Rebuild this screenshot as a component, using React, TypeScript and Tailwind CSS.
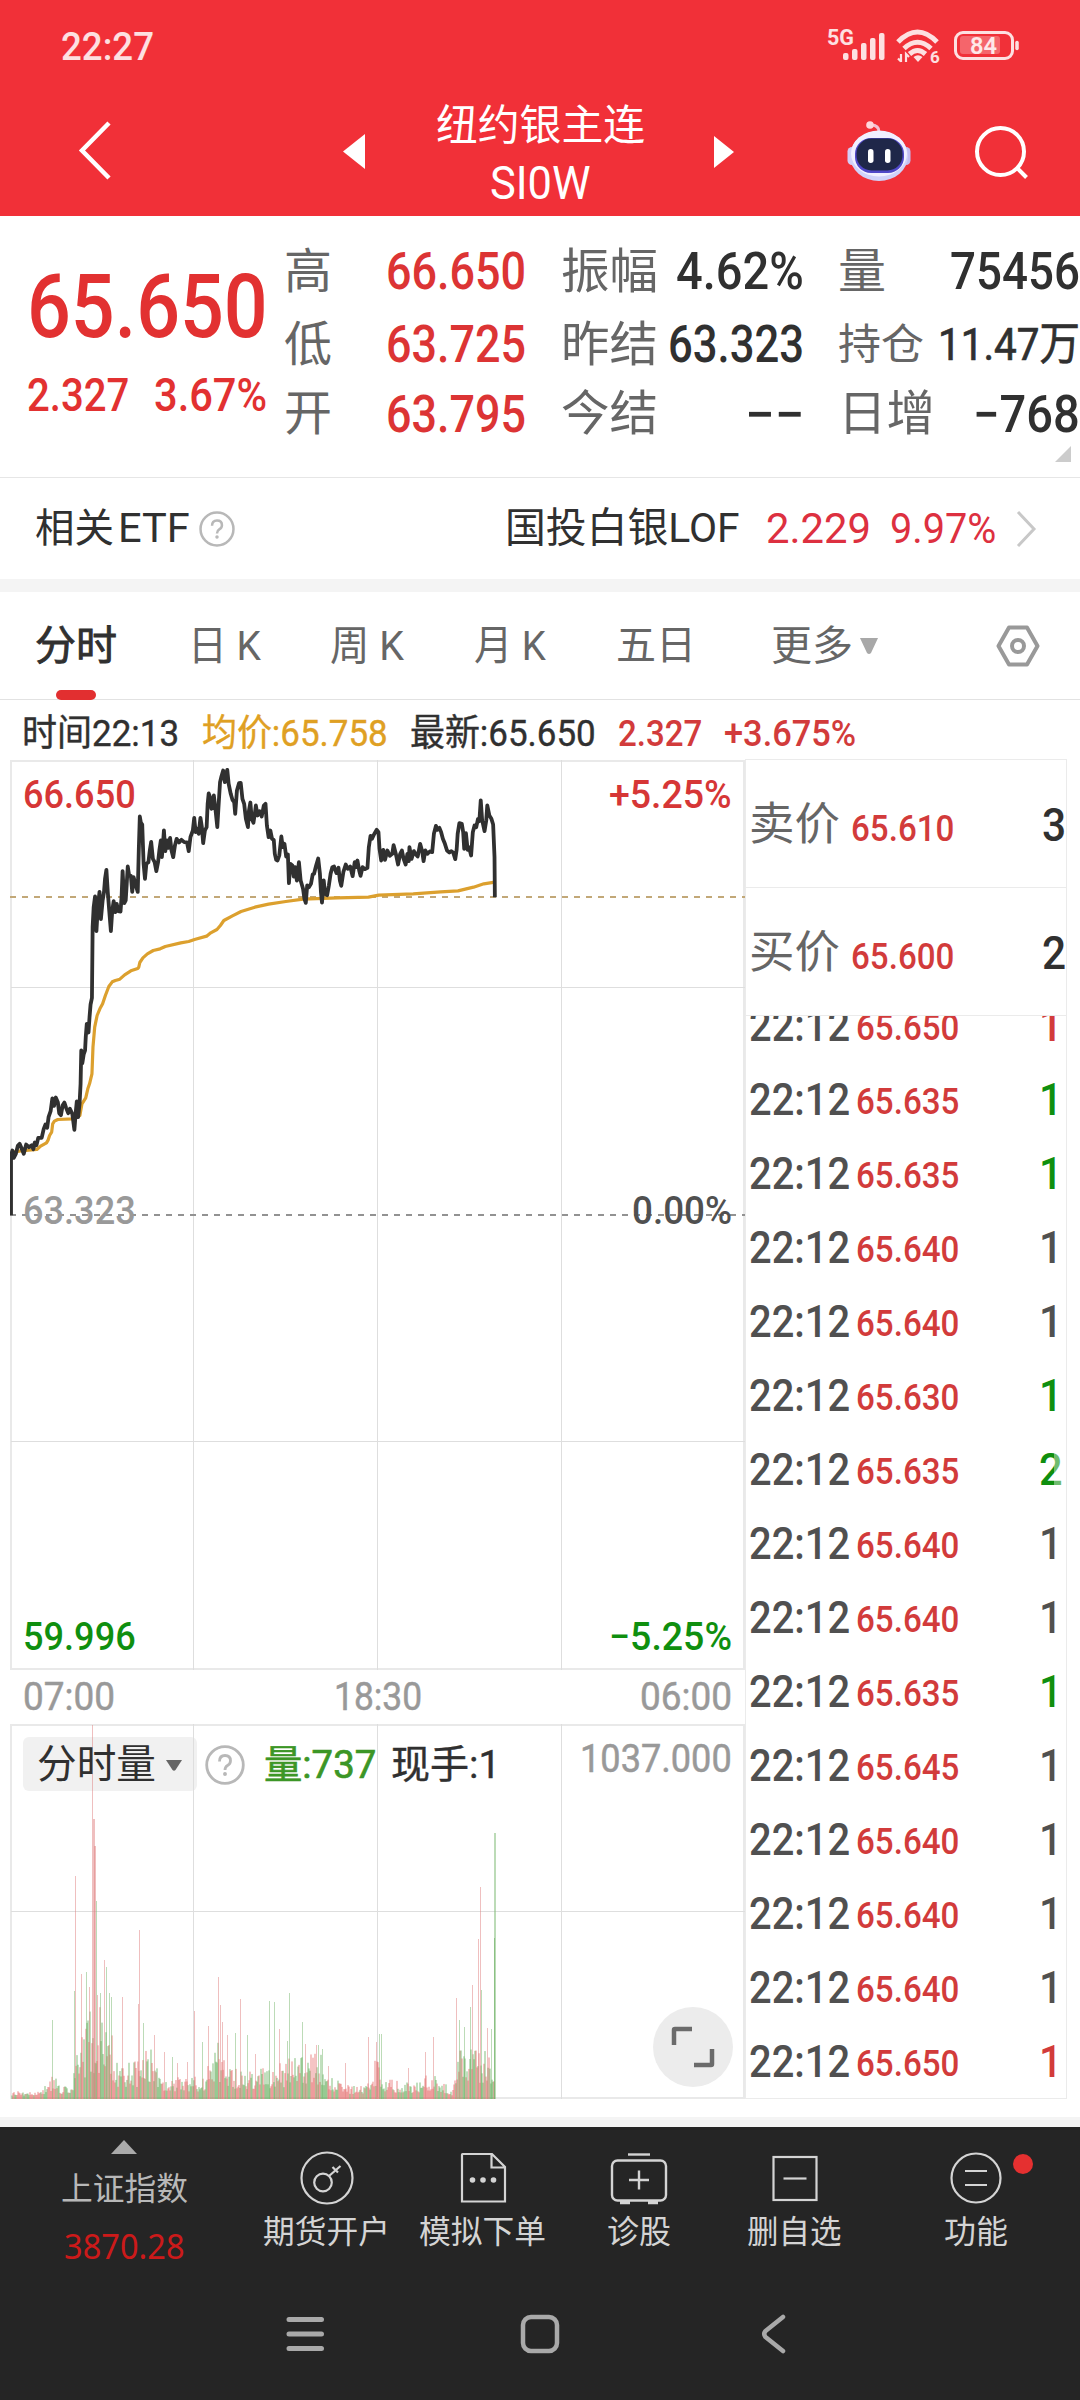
import React, { useLayoutEffect, useRef } from 'react';

interface FitProps {
  text: string;
  className?: string;
}

// Squeezes the glyphs horizontally so that the text fills its box
function Fit({ text, className = '' }: FitProps) {
  const box = useRef<HTMLSpanElement>(null);
  const inner = useRef<HTMLSpanElement>(null);

  useLayoutEffect(() => {
    if (!box.current || !inner.current) return;
    const scale = box.current.clientWidth / inner.current.offsetWidth;
    inner.current.style.transform = `scaleX(${scale})`;
  }, [text]);

  return (
    <span className={`block shrink-0 leading-none whitespace-nowrap ${className}`}>
      <span ref={box} className="block w-full">
        <span ref={inner} className="inline-block origin-left whitespace-pre align-top">{text}</span>
      </span>
    </span>
  );
}

function StatusBar() {
  return (
    <div className="flex h-[96px] items-center pl-[61px] text-white/85">
      <Fit text="22:27" className="mt-[-2px] w-[93px] text-[39px] font-medium" />
      <svg className="mt-[-4px] ml-[670px]" width="196" height="40" viewBox="824 26 196 40" fill="none">
        <text x="827" y="45" fontSize="22" fontWeight="700" fill="currentColor" textLength="27" lengthAdjust="spacingAndGlyphs">5G</text>
        <g fill="currentColor">
          <rect x="843" y="53" width="5.500" height="7" rx="2" />
          <rect x="852" y="49" width="5.500" height="11" rx="2" />
          <rect x="861" y="43" width="5.500" height="17" rx="2" />
          <rect x="870" y="38" width="5.500" height="22" rx="2" />
          <rect x="879" y="33" width="5.500" height="27" rx="2" />
        </g>
        <g stroke="currentColor" strokeWidth="5">
          <path d="M898 42Q917.500 22 937 42" />
          <path d="M904 48.500Q917.500 36 931 48.500" />
          <path d="M909.500 54Q917.500 47 925.500 54" />
        </g>
        <path d="M913.500 57Q918 53.500 922.500 57L918 62z" fill="currentColor" />
        <path d="M901 62v-8M898 58.500l3 3M906 62v-8l3 3" stroke="currentColor" strokeWidth="2.200" />
        <text x="930" y="62.500" fontSize="17" fontWeight="700" fill="currentColor">6</text>
        <rect x="955.500" y="32.500" width="57" height="26" rx="7.500" stroke="currentColor" strokeWidth="3" />
        <rect x="960" y="36" width="40" height="18" rx="3" fill="currentColor" opacity="0.3" />
        <path d="M1017 42.500v6" stroke="currentColor" strokeWidth="3.500" strokeLinecap="round" />
        <text x="970" y="54" fontSize="23" fontWeight="600" fill="currentColor" textLength="27" lengthAdjust="spacingAndGlyphs">84</text>
      </svg>
    </div>
  );
}

function Robot() {
  return (
    <svg width="64" height="62" viewBox="0 0 64 62" fill="none">
      <path d="M32 12Q32 5 24 5" stroke="#f3c0d2" strokeWidth="3" />
      <circle cx="23" cy="5" r="3.800" fill="#ffd6dc" />
      <rect x="0.500" y="27" width="9" height="18" rx="4.500" fill="#d4cdf6" />
      <rect x="54.500" y="27" width="9" height="18" rx="4.500" fill="#c3bdf0" />
      <ellipse cx="32" cy="36" rx="29" ry="25" fill="#d0d2fa" />
      <ellipse cx="32" cy="33.500" rx="28" ry="23" fill="#f1efff" />
      <rect x="8" y="18" width="49" height="35" rx="16" fill="#5048c8" />
      <rect x="9.500" y="18.500" width="46" height="32" rx="15" fill="#1f2749" />
      <rect x="21" y="29" width="5.500" height="14" rx="2.700" fill="#fff" />
      <rect x="38" y="29" width="5.500" height="14" rx="2.700" fill="#fff" />
    </svg>
  );
}

function Header() {
  return (
    <header className="h-[216px] bg-[#f13038] text-white">
      <StatusBar />
      <div className="flex h-[120px] items-start">
        <svg className="mt-[24px] ml-[76px]" width="38" height="62" viewBox="0 0 38 62" fill="none" stroke="#fff" strokeWidth="4.500">
          <path d="M33 3L6 30.500L33 58" />
        </svg>
        <svg className="mt-[38px] ml-[229px]" width="22" height="35" viewBox="0 0 22 35" fill="#fff">
          <path d="M0 17.500L22 0V35z" />
        </svg>
        <div className="mt-[9px] ml-[69px] flex w-[212px] flex-col items-center">
          <Fit text="纽约银主连" className="w-[209px] text-[42px]" />
          <Fit text="SI0W" className="mt-[13px] w-[101px] text-[46px]" />
        </div>
        <svg className="mt-[40px] ml-[68px]" width="20" height="32" viewBox="0 0 20 32" fill="#fff">
          <path d="M20 16L0 0V32z" />
        </svg>
        <div className="mt-[24px] ml-[113px]">
          <Robot />
        </div>
        <svg className="mt-[28px] ml-[62px]" width="58" height="58" viewBox="0 0 58 58" fill="none" stroke="#fff" strokeWidth="4">
          <circle cx="27.500" cy="27.500" r="23.500" />
          <path d="M44 44L53.500 53.500" />
        </svg>
      </div>
    </header>
  );
}

function StatRow({ label, labelClass, value, valueClass, rowClass }: {
  label: string;
  labelClass: string;
  value: string;
  valueClass: string;
  rowClass: string;
}) {
  return (
    <div className={`flex items-center justify-between ${rowClass}`}>
      <Fit text={label} className={`text-[#666] ${labelClass}`} />
      <Fit text={value} className={valueClass} />
    </div>
  );
}

function Quote() {
  return (
    <section className="relative flex h-[261px] pt-[19px]">
      <div className="ml-[27px] w-[240px] text-[#e23131]">
        <Fit text="65.650" className="mt-[27px] w-[241px] text-[89px] font-medium" />
        <div className="mt-[21px] flex justify-between">
          <Fit text="2.327" className="w-[102px] text-[46px] font-medium" />
          <Fit text="3.67%" className="w-[113px] text-[46px] font-medium" />
        </div>
      </div>
      <div className="ml-[17px] w-[242px] text-[#dc3434]">
        <StatRow label="高" labelClass="w-[48px] text-[48px]" value="66.650" valueClass="w-[140px] text-[51px] font-medium" rowClass="h-[73px]" />
        <StatRow label="低" labelClass="w-[48px] text-[48px]" value="63.725" valueClass="w-[140px] text-[51px] font-medium" rowClass="h-[73px]" />
        <StatRow label="开" labelClass="w-[48px] text-[48px]" value="63.795" valueClass="w-[140px] text-[51px] font-medium" rowClass="h-[66px]" />
      </div>
      <div className="ml-[35px] w-[243px] text-[#303030]">
        <StatRow label="振幅" labelClass="w-[97px] text-[48px]" value="4.62%" valueClass="w-[128px] text-[51px] font-medium" rowClass="h-[73px]" />
        <StatRow label="昨结" labelClass="w-[97px] text-[48px]" value="63.323" valueClass="w-[136px] text-[51px] font-medium" rowClass="h-[73px]" />
        <StatRow label="今结" labelClass="w-[97px] text-[48px]" value="−−" valueClass="w-[59px] text-[51px] font-medium" rowClass="h-[66px]" />
      </div>
      <div className="ml-[34px] w-[242px] text-[#303030]">
        <StatRow label="量" labelClass="w-[48px] text-[48px]" value="75456" valueClass="w-[130px] text-[51px] font-medium" rowClass="h-[73px]" />
        <StatRow label="持仓" labelClass="w-[86px] text-[42px]" value="11.47万" valueClass="w-[142px] text-[45px] [-webkit-text-stroke:0.7px]" rowClass="h-[73px]" />
        <StatRow label="日增" labelClass="w-[97px] text-[48px]" value="−768" valueClass="w-[107px] text-[51px] font-medium" rowClass="h-[66px]" />
      </div>
      <svg className="absolute top-[230px] left-[1055px]" width="16" height="16" viewBox="0 0 16 16" fill="#ccc">
        <path d="M16 0V16H0z" />
      </svg>
    </section>
  );
}

function HelpIcon({ size }: { size: number }) {
  return (
    <svg width={size} height={size} viewBox="0 0 40 40" fill="none" stroke="#b8b8b8" strokeWidth="2.800">
      <circle cx="20" cy="20" r="18.300" />
      <path d="M14.500 16.500q0-6 5.500-6t5.500 5.200q0 3-3 4.800q-2.500 1.500-2.500 4.500" />
      <circle cx="20" cy="29" r="1.200" fill="#b8b8b8" stroke="#b8b8b8" strokeWidth="1.500" />
    </svg>
  );
}

function EtfRow() {
  return (
    <section className="flex h-[102px] items-center border-t border-[#e6e6e6] pl-[35px] text-[#303030]">
      <Fit text="相关" className="w-[79px] text-[40px]" />
      <Fit text="ETF" className="ml-[4px] w-[72px] text-[41px]" />
      <div className="ml-[9px]">
        <HelpIcon size={36} />
      </div>
      <Fit text="国投白银LOF" className="ml-[270px] w-[235px] text-[41px]" />
      <Fit text="2.229" className="ml-[26px] w-[105px] text-[43px] text-[#dd3040]" />
      <Fit text="9.97%" className="ml-[19px] w-[106px] text-[43px] text-[#dd3040]" />
      <svg className="ml-[20px]" width="22" height="38" viewBox="0 0 22 38" fill="none" stroke="#c8c8c8" strokeWidth="3">
        <path d="M2 2L18 19L2 36" />
      </svg>
    </section>
  );
}

function Tabs() {
  return (
    <nav className="flex h-[108px] items-center border-b border-[#e2e2e2] pt-[1px] pl-[35px] text-[#666]">
      <div className="relative">
        <Fit text="分时" className="w-[82px] text-[41px] text-[#303030] [-webkit-text-stroke:0.9px]" />
        <div className="absolute top-[64px] left-[21px] h-[10px] w-[40px] rounded-[5px] bg-[#e22f30]" />
      </div>
      <Fit text="日 K" className="ml-[71px] w-[73px] text-[41px]" />
      <Fit text="周 K" className="ml-[69px] w-[74px] text-[41px]" />
      <Fit text="月 K" className="ml-[70px] w-[72px] text-[41px]" />
      <Fit text="五日" className="ml-[70px] w-[80px] text-[40px]" />
      <Fit text="更多" className="ml-[75px] w-[82px] text-[41px]" />
      <svg className="ml-[7px]" width="18" height="16" viewBox="0 0 18 16" fill="#a8a8a8">
        <path d="M0 0H18L11 15Q9 17 7 15z" />
      </svg>
      <svg className="ml-[118px]" width="44" height="42" viewBox="0 0 44 42" fill="none" stroke="#999" strokeWidth="4" strokeLinejoin="round">
        <path d="M13 2.500H31L41.500 21L31 39.500H13L2.500 21z" />
        <circle cx="22" cy="21" r="6" />
      </svg>
    </nav>
  );
}

function InfoLine() {
  return (
    <div className="flex h-[59px] items-center pt-[8px] pl-[22px] text-[37px] text-[#303030]">
      <Fit text="时间22:13" className="w-[157px] [-webkit-text-stroke:0.4px]" />
      <Fit text="均价:65.758" className="ml-[23px] w-[186px] text-[#dfa023] [-webkit-text-stroke:0.4px]" />
      <Fit text="最新:65.650" className="ml-[22px] w-[186px] [-webkit-text-stroke:0.4px]" />
      <Fit text="2.327" className="ml-[22px] w-[84px] font-medium text-[#d23b3b]" />
      <Fit text="+3.675%" className="ml-[22px] w-[132px] font-medium text-[#d23b3b]" />
    </div>
  );
}

const PRICE =
  'M32 1394V1215L36 1200L40 1222L46 1210L52 1185L57 1180L62 1192L69 1210L76 1182L84 1190L92 1184L97 1196L101 1176L106 1184L111 1162L121 1162L127 1135L132 1122L137 1132L141 1100L147 1082L152 1044L157 1066L162 1041L168 1055L172 1088L177 1094L182 1064L187 1056L192 1072L198 1088L203 1075L210 1090L216 1138L220 1085L223 1053L227 1100L231 1060L234 1000L236 900L239 938L243 912L247 900L249 860L252 820L257 846L260 800L263 762L267 742L269 530L272 470L276 438L280 542L284 470L289 424L293 506L298 450L302 425L305 385L309 358L313 425L317 478L322 542L326 480L330 452L335 485L339 460L343 482L350 483L353 440L356 362L361 458L365 450L368 400L371 348L375 375L380 376L384 424L388 380L393 400L400 424L403 300L406 198L409 216L413 222L417 340L421 385L425 340L431 335L435 300L439 274L444 325L449 335L454 362L459 335L463 298L467 270L470 320L473 285L476 240L480 302L485 270L489 292L494 262L498 300L503 320L508 285L513 265L520 276L527 268L535 275L543 276L548 302L553 260L560 240L564 202L568 245L573 235L577 250L582 202L586 228L590 278L595 240L600 230L603 160L606 129L610 140L614 175L618 172L621 135L626 180L631 230L635 160L639 95L643 78L648 60L653 95L657 70L660 58L664 100L670 130L675 148L680 155L683 190L688 120L694 98L699 97L704 145L709 160L714 205L720 230L723 180L727 156L731 205L736 217L740 190L743 165L748 195L754 182L760 198L766 165L771 160L775 225L780 260L785 240L790 265L795 268L798 310L802 328L806 330L811 315L817 258L821 290L826 280L831 318L836 312L839 398L843 340L849 345L853 378L857 350L862 390L868 335L873 390L880 415L884 445L888 457L892 405L897 410L903 400L908 372L912 370L918 345L924 324L929 370L932 425L935 456L940 390L944 430L950 434L955 405L960 370L965 350L970 348L977 368L983 352L987 390L991 406L997 365L1004 342L1010 355L1017 348L1024 377L1030 335L1034 350L1038 330L1043 360L1047 376L1053 350L1060 356L1067 352L1071 290L1076 256L1080 265L1086 252L1094 238L1099 245L1102 295L1107 330L1113 298L1118 328L1125 300L1132 316L1139 310L1143 284L1149 308L1156 342L1162 310L1167 300L1172 325L1178 342L1183 310L1187 332L1189 290L1195 325L1202 302L1208 312L1213 318L1220 280L1226 302L1230 332L1235 300L1241 310L1248 303L1255 305L1260 250L1266 226L1270 238L1276 232L1281 245L1286 265L1292 280L1298 300L1305 306L1310 302L1316 306L1322 326L1326 298L1329 250L1334 218L1341 220L1345 245L1348 295L1353 248L1358 298L1362 290L1368 315L1373 245L1378 225L1383 230L1388 205L1392 212L1396 150L1400 208L1407 242L1412 210L1415 165L1421 195L1427 205L1432 222L1436 320L1437 440';

const AVERAGE =
  'M38 1205L60 1201L107 1197L118 1187L135 1177L140 1168L144 1155L150 1145L153 1120L158 1112L168 1107L210 1105L232 1095L238 1060L249 1042L255 1015L260 1000L267 970L270 890L275 830L282 795L290 775L298 760L306 735L316 708L326 694L335 690L348 686L362 673L380 661L400 654L403 650L406 636L415 622L428 610L445 600L465 595L480 588L525 577L548 573L565 567L600 557L612 547L630 537L640 525L650 510L675 496L700 483L740 470L780 461L830 453L880 446L980 442L1070 440L1100 434L1200 430L1280 424L1330 421L1375 410L1405 400L1437 395';

function PriceChart() {
  return (
    <div className="relative h-[911px] w-[735px]">
      <svg className="block" width="735" height="911" viewBox="10 759 735 911" fill="none">
        <g stroke="#e9e9e9" strokeWidth="2">
          <path d="M11 761H745M11 1669H745M11 760V1670M744 760V1670" />
        </g>
        <g stroke="#dedede" strokeWidth="1">
          <path d="M11 987.500H745M11 1441.500H745M193.500 760V1670M377.500 760V1670M561.500 760V1670" />
        </g>
        <path d="M10 897H745" stroke="#c2a878" strokeWidth="2" strokeDasharray="6 6" />
        <path d="M10 1215H745" stroke="#929292" strokeWidth="2" strokeDasharray="6 6" />
        <g transform="translate(0 750.500) scale(0.34437 0.33333)" strokeLinejoin="round">
          <path d={AVERAGE} stroke="#dca02e" strokeWidth="3.200" vectorEffect="non-scaling-stroke" />
          <path d={PRICE} stroke="#303030" strokeWidth="3.800" vectorEffect="non-scaling-stroke" />
        </g>
      </svg>
      <div className="absolute inset-0 text-[39px] font-medium">
        <Fit text="66.650" className="absolute top-[17px] left-[13px] w-[113px] text-[#d63636]" />
        <Fit text="+5.25%" className="absolute top-[17px] right-[13px] w-[123px] text-[#d63636]" />
        <Fit text="63.323" className="absolute top-[433px] left-[13px] w-[113px] text-[#999]" />
        <Fit text="0.00%" className="absolute top-[433px] right-[13px] w-[100px] text-[#505050]" />
        <Fit text="59.996" className="absolute top-[859px] left-[13px] w-[113px] text-[#0f8f0f]" />
        <Fit text="−5.25%" className="absolute top-[859px] right-[13px] w-[123px] text-[#0f8f0f]" />
      </div>
    </div>
  );
}

// [x, height, up]
const PEAKS: [number, number, number][] = [
  [52, 79, 0], [75, 223, 1], [74, 108, 0], [81, 125, 1], [86, 127, 0], [89, 112, 1], [92, 374, 1], [93, 280, 1],
  [94, 253, 1], [96, 198, 0], [97, 104, 1], [100, 106, 0], [104, 139, 1], [106, 132, 0], [109, 106, 0], [111, 102, 0],
  [122, 102, 1], [138, 95, 1], [139, 169, 1], [143, 76, 0], [154, 64, 1], [164, 47, 1], [172, 42, 0], [177, 36, 1],
  [187, 37, 1], [194, 88, 1], [202, 57, 0], [208, 73, 1], [218, 122, 1], [220, 94, 1], [222, 77, 1], [227, 64, 1],
  [235, 66, 0], [240, 100, 1], [247, 64, 0], [255, 45, 1], [269, 98, 0], [274, 97, 0], [279, 70, 1], [287, 58, 0],
  [289, 106, 0], [302, 77, 0], [305, 55, 1], [316, 54, 1], [318, 54, 0], [322, 50, 0], [328, 33, 1], [345, 36, 1],
  [368, 62, 1], [376, 57, 1], [379, 65, 0], [381, 65, 0], [408, 31, 1], [425, 47, 1], [433, 62, 1], [456, 101, 1],
  [459, 79, 0], [464, 72, 0], [470, 92, 0], [472, 114, 1], [478, 160, 1], [480, 212, 1], [481, 109, 0], [487, 71, 1],
  [491, 70, 0], [494, 266, 0],
];

const ENVELOPE: [number, number][] = [
  [11, 6], [36, 5], [48, 16], [52, 30], [57, 12], [70, 10], [80, 65], [93, 95], [103, 92], [110, 74], [117, 30],
  [138, 40], [145, 62], [152, 42], [165, 22], [203, 22], [220, 62], [231, 30], [268, 30], [279, 34], [303, 46],
  [320, 44], [330, 24], [344, 12], [365, 12], [375, 42], [382, 18], [413, 16], [434, 28], [451, 6], [458, 60],
  [482, 56], [495, 42],
];

function envelopeAt(x: number) {
  const i = Math.max(1, ENVELOPE.findIndex(([ex]) => ex >= x));
  const [x0, h0] = ENVELOPE[i - 1];
  const [x1, h1] = ENVELOPE[i];
  return h0 + ((h1 - h0) * (x - x0)) / (x1 - x0);
}

function buildBars() {
  let seed = 71;
  const random = () => {
    seed = (seed * 16807) % 2147483647;
    return seed / 2147483647;
  };
  const bars: { x: number; h: number; up: boolean }[] = [];
  for (let x = 11; x < 494; x += 1) {
    bars.push({ x, h: 2 + envelopeAt(x) * (0.25 + 0.75 * Math.pow(random(), 1.5)), up: random() > 0.45 });
  }
  return bars;
}

const bars = buildBars();

function VolumeChart() {
  return (
    <div className="relative h-[375px] w-[735px]">
      <svg className="block" width="735" height="375" viewBox="10 1724 735 375" fill="none">
        <g stroke="#e9e9e9" strokeWidth="2">
          <path d="M11 1725H745M11 2098H745M11 1724V2099M744 1724V2099" />
        </g>
        <rect x="23" y="1737" width="174" height="54" rx="6" fill="#f1f1f1" />
        <g stroke="#dedede" strokeWidth="1">
          <path d="M11 1911.500H745M193.500 1724V2099M377.500 1724V2099M561.500 1724V2099" />
        </g>
        {bars.map((bar, i) => (
          <rect key={i} x={bar.x} y={2099 - bar.h} width="2" height={bar.h} fill={bar.up ? '#e04848' : '#3f9c36'} opacity="0.32" />
        ))}
        {PEAKS.map(([x, h, up], i) => (
          <rect key={i} x={x} y={2099 - h} width={h > 240 && x !== 92 ? 2 : 1} height={h} fill={up ? '#e08080' : '#7ab870'} opacity="0.5" />
        ))}
        <rect x="494" y="1938" width="1" height="161" fill="#5aa850" opacity="0.5" />
      </svg>
      <div className="absolute top-[14px] left-[13px] flex h-[54px] items-center text-[#303030]">
        <Fit text="分时量" className="ml-[14px] w-[119px] text-[40px]" />
        <svg className="ml-[10px]" width="16" height="11" viewBox="0 0 16 11" fill="#666">
          <path d="M0 0H16L9.500 10Q8 11.500 6.500 10z" />
        </svg>
        <div className="ml-[23px]">
          <HelpIcon size={40} />
        </div>
        <Fit text="量:737" className="ml-[19px] w-[112px] text-[39px] text-[#3c9626] [-webkit-text-stroke:0.7px]" />
        <Fit text="现手:1" className="ml-[15px] w-[109px] text-[39px] [-webkit-text-stroke:0.4px]" />
      </div>
      <Fit text="1037.000" className="absolute top-[16px] right-[13px] w-[152px] text-[39px] text-[#999] [-webkit-text-stroke:0.5px]" />
      <div className="absolute top-[283px] left-[643px] flex h-[80px] w-[80px] items-center justify-center rounded-full bg-[#ececec]">
        <svg width="44" height="42" viewBox="0 0 44 42" fill="none" stroke="#6b6b6b" strokeWidth="4.500">
          <path d="M3 19V4Q3 3 4 3H21M41 23V38Q41 39 40 39H23" />
        </svg>
      </div>
    </div>
  );
}

function Charts() {
  return (
    <div className="ml-[10px] w-[735px]">
      <PriceChart />
      <div className="flex h-[54px] items-center justify-between pt-[1px] pr-[13px] pl-[13px] text-[39px] text-[#999] [-webkit-text-stroke:0.5px]">
        <Fit text="07:00" className="w-[92px]" />
        <Fit text="18:30" className="w-[88px]" />
        <Fit text="06:00" className="w-[92px]" />
      </div>
      <VolumeChart />
    </div>
  );
}

const ticks = [
  { price: '65.650', volume: '1', color: 'text-[#d23b3b]' },
  { price: '65.635', volume: '1', color: 'text-[#0f8f0f]' },
  { price: '65.635', volume: '1', color: 'text-[#0f8f0f]' },
  { price: '65.640', volume: '1', color: 'text-[#505050]' },
  { price: '65.640', volume: '1', color: 'text-[#505050]' },
  { price: '65.630', volume: '1', color: 'text-[#0f8f0f]' },
  { price: '65.635', volume: '2', color: 'text-[#0f8f0f]' },
  { price: '65.640', volume: '1', color: 'text-[#505050]' },
  { price: '65.640', volume: '1', color: 'text-[#505050]' },
  { price: '65.635', volume: '1', color: 'text-[#0f8f0f]' },
  { price: '65.645', volume: '1', color: 'text-[#505050]' },
  { price: '65.640', volume: '1', color: 'text-[#505050]' },
  { price: '65.640', volume: '1', color: 'text-[#505050]' },
  { price: '65.640', volume: '1', color: 'text-[#505050]' },
  { price: '65.650', volume: '1', color: 'text-[#d23b3b]' },
];

function OrderRow({ label, price, volume }: { label: string; price: string; volume: string }) {
  return (
    <div className="flex h-[128px] items-start border-b border-[#ebebeb] pl-[3px]">
      <Fit text={label} className="mt-[42px] w-[91px] text-[45px] text-[#666]" />
      <Fit text={price} className="mt-[50px] ml-[11px] w-[103px] text-[37px] font-medium text-[#d23b3b]" />
      <Fit text={volume} className="mt-[42px] ml-[88px] w-[24px] text-[46px] font-medium text-[#303030]" />
    </div>
  );
}

function TradeList() {
  return (
    <div className="h-[1340px] w-[322px] border border-[#ebebeb]">
      <OrderRow label="卖价" price="65.610" volume="3" />
      <OrderRow label="买价" price="65.600" volume="2" />
      <div className="relative h-[1082px] overflow-hidden">
        <div className="mt-[-23px]">
          {ticks.map((tick, i) => (
            <div key={i} className="flex h-[74px] items-start pl-[3px]">
              <Fit text="22:12" className="mt-[10px] w-[101px] text-[45px] font-medium text-[#505050]" />
              <Fit text={tick.price} className="mt-[16px] ml-[6px] w-[103px] text-[37px] font-medium text-[#d23b3b]" />
              <Fit text={tick.volume} className={`mt-[10px] ml-[80px] w-[24px] text-[45px] font-medium ${tick.color}`} />
            </div>
          ))}
        </div>
        <div className="absolute top-[424px] right-[2px] bottom-0 w-[10px] bg-white/40" />
      </div>
    </div>
  );
}

function BottomBar() {
  return (
    <footer className="h-[273px] bg-[#252525] text-[#d4d4d4]">
      <div className="flex h-[145px] items-start">
        <div className="ml-[60px] flex w-[128px] flex-col items-center pt-[13px]">
          <svg width="26" height="14" viewBox="0 0 26 14" fill="#aaa">
            <path d="M13 0L26 14H0z" />
          </svg>
          <Fit text="上证指数" className="mt-[20px] w-[127px] text-[31.500px] text-[#b8b8b8]" />
          <Fit text="3870.28" className="mt-[22px] w-[121px] font-['Noto_Sans',sans-serif] text-[35px] text-[#cc1a1a]" />
        </div>
        <div className="ml-[75px] flex w-[127px] flex-col items-center pt-[24px]">
          <svg width="54" height="54" viewBox="0 0 54 54" fill="none" stroke="currentColor" strokeWidth="2.200">
            <circle cx="27" cy="27" r="25.500" />
            <circle cx="23" cy="31.500" r="8.800" />
            <path d="M29 25L40.500 15M32.500 16L38 21.500" />
          </svg>
          <Fit text="期货开户" className="mt-[12px] w-[127px] text-[31.500px]" />
        </div>
        <div className="ml-[29px] flex w-[127px] flex-col items-center pt-[24px]">
          <svg width="54" height="54" viewBox="0 0 54 54" fill="none" stroke="currentColor" strokeWidth="2.200">
            <path d="M6 3.500Q6 3 6.500 3H36L49 16V50.500H6zM35.500 3V16.500H49" />
            <g fill="currentColor" stroke="none">
              <circle cx="16.500" cy="29" r="2.800" />
              <circle cx="27" cy="29" r="2.800" />
              <circle cx="37.500" cy="29" r="2.800" />
            </g>
          </svg>
          <Fit text="模拟下单" className="mt-[12px] w-[127px] text-[31.500px]" />
        </div>
        <div className="ml-[61px] flex w-[64px] flex-col items-center pt-[24px]">
          <svg width="58" height="54" viewBox="0 0 58 54" fill="none" stroke="currentColor" strokeWidth="2.400">
            <path d="M18 3.500H40" />
            <rect x="2" y="9.500" width="54" height="40" rx="5.500" />
            <path d="M19 29H39M29 19.500V38.500" />
            <path d="M10 51.500H20M38 51.500H48" strokeWidth="3.500" />
          </svg>
          <Fit text="诊股" className="mt-[12px] w-[64px] text-[31.500px]" />
        </div>
        <div className="ml-[76px] flex w-[95px] flex-col items-center pt-[24px]">
          <svg width="54" height="54" viewBox="0 0 54 54" fill="none" stroke="currentColor" strokeWidth="2.200">
            <rect x="5.500" y="6" width="43" height="43" />
            <path d="M15.500 27.500H38.500" />
          </svg>
          <Fit text="删自选" className="mt-[12px] w-[95px] text-[31.500px]" />
        </div>
        <div className="relative ml-[102px] flex w-[64px] flex-col items-center pt-[24px]">
          <svg width="54" height="54" viewBox="0 0 54 54" fill="none" stroke="currentColor" strokeWidth="2.200">
            <circle cx="27" cy="27" r="24.500" />
            <path d="M16 20H38M16 34H38" />
          </svg>
          <Fit text="功能" className="mt-[12px] w-[64px] text-[31.500px]" />
          <div className="absolute top-[27px] left-[69px] h-[20px] w-[20px] rounded-full bg-[#e53030]" />
        </div>
      </div>
      <div className="flex h-[124px] items-center text-[#a9a9a9]">
        <svg className="ml-[286px]" width="38" height="38" viewBox="0 0 38 38" fill="none" stroke="currentColor" strokeWidth="5" strokeLinecap="round">
          <path d="M3 4.500H35.500M3 19H35.500M3 33.500H35.500" />
        </svg>
        <svg className="ml-[196px]" width="40" height="40" viewBox="0 0 40 40" fill="none" stroke="currentColor" strokeWidth="4.500">
          <rect x="3" y="3" width="34" height="34" rx="8" />
        </svg>
        <svg className="ml-[200px]" width="28" height="40" viewBox="0 0 28 40" fill="none" stroke="currentColor" strokeWidth="4.500" strokeLinecap="round" strokeLinejoin="round">
          <path d="M23 3L5.500 17Q3 20 5.500 23L23 37" />
        </svg>
      </div>
    </footer>
  );
}

export default function App() {
  return (
    <div className="h-[2400px] w-[1080px] overflow-hidden bg-white font-['Roboto','Noto_Sans_CJK_SC',sans-serif]">
      <Header />
      <Quote />
      <EtfRow />
      <div className="h-[13px] bg-[#f4f4f4]" />
      <Tabs />
      <InfoLine />
      <div className="flex h-[1358px] items-start">
        <Charts />
        <TradeList />
      </div>
      <div className="h-[10px] bg-[#f4f4f4]" />
      <BottomBar />
    </div>
  );
}
